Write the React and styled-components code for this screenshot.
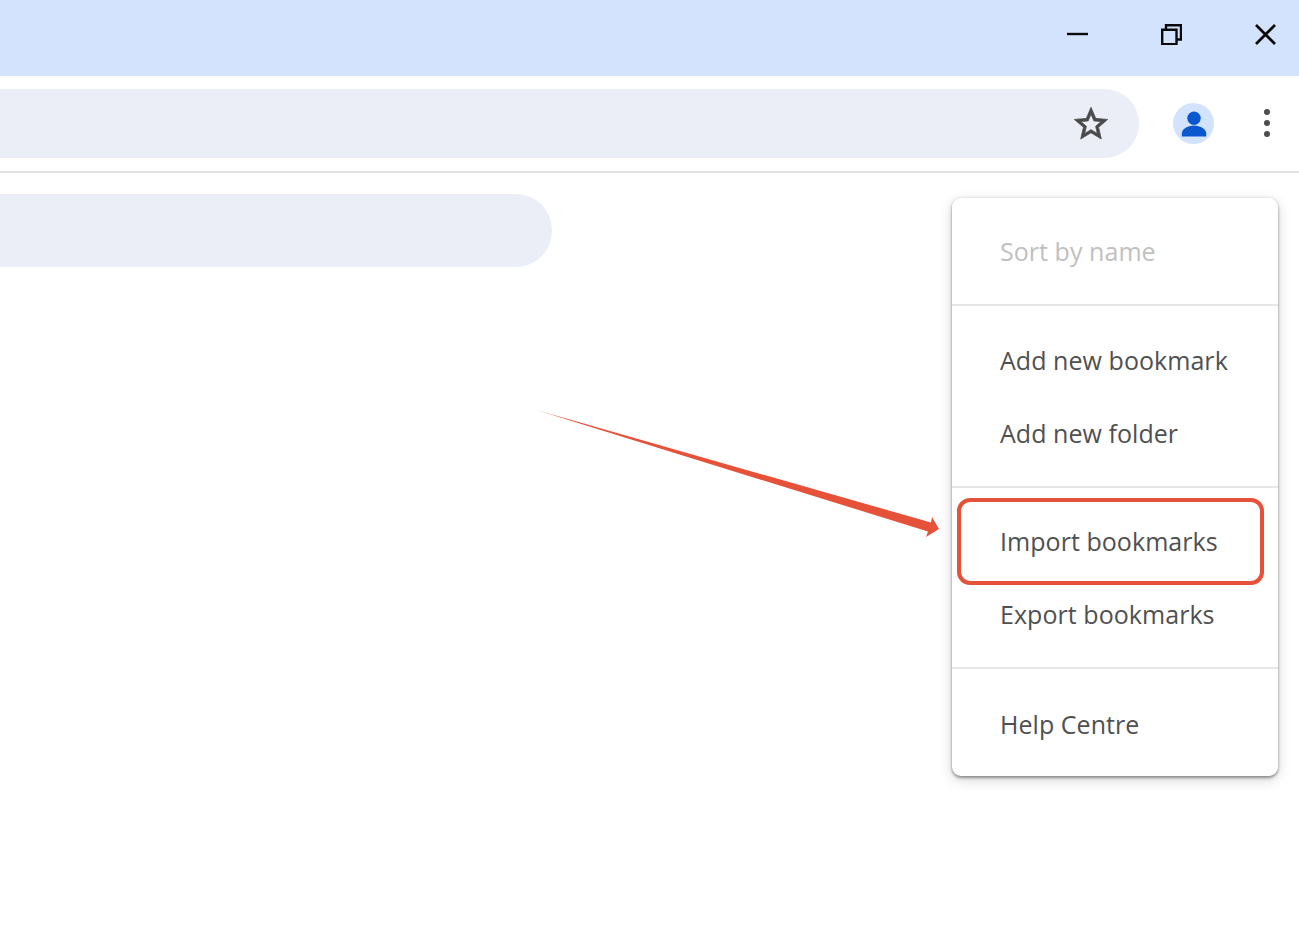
import React from 'react';
import styled, { createGlobalStyle } from 'styled-components';

const GlobalStyle = createGlobalStyle`
  html, body {
    margin: 0;
    padding: 0;
    background: #fff;
    overflow: hidden;
  }
  body {
    font-family: 'Open Sans', 'Noto Sans', 'Liberation Sans', sans-serif;
  }
`;

const Page = styled.div`
  position: relative;
  width: 1299px;
  height: 937px;
  overflow: hidden;
  background: #fff;
`;

const TitleBar = styled.div`
  height: 76px;
  background: #d3e3fd;
  display: flex;
  justify-content: flex-end;
  gap: 73px;
  padding: 24px 23px 0 0;
  box-sizing: border-box;
`;

const WindowIcon = styled.svg`
  width: 21px;
  height: 21px;
  display: block;
  fill: none;
  stroke: #0a0a0a;
`;

const Toolbar = styled.div`
  height: 95px;
  display: flex;
  align-items: flex-start;
  padding-top: 13px;
  box-sizing: border-box;
`;

const Omnibox = styled.div`
  width: 1139px;
  height: 69px;
  background: #ebeef7;
  border-radius: 0 35px 35px 0;
  display: flex;
  align-items: center;
  justify-content: flex-end;
  padding-right: 28px;
  box-sizing: border-box;
`;

const Avatar = styled.div`
  width: 41px;
  height: 41px;
  margin: 14px 0 0 34px;
  border-radius: 50%;
  background: #d3e3fd;
  display: flex;
  align-items: center;
  justify-content: center;
`;

const Kebab = styled.div`
  margin: 20px 0 0 50px;
  display: flex;
  flex-direction: column;
  gap: 5px;
`;

const Dot = styled.span`
  width: 6px;
  height: 6px;
  border-radius: 50%;
  background: #4d4d4d;
`;

const Divider = styled.div`
  height: 2px;
  background: #e1e1e1;
`;

const Content = styled.div`
  display: flex;
  justify-content: space-between;
  align-items: flex-start;
  padding: 21px 21px 0 0;
`;

const SearchPill = styled.div`
  width: 552px;
  height: 73px;
  background: #ebeef7;
  border-radius: 0 36px 36px 0;
`;

const Menu = styled.div`
  width: 326px;
  margin-top: 4px;
  background: #fff;
  border-radius: 9px;
  box-shadow: 0 2px 3px rgba(0, 0, 0, 0.36), 0 0 3px rgba(0, 0, 0, 0.12), 0 4px 14px rgba(0, 0, 0, 0.16);
`;

const MenuGroup = styled.div`
  padding: ${(p) => p.$top}px 0 ${(p) => p.$bottom}px;
  border-bottom: ${(p) => (p.$last ? '0' : '2px solid #e6e6e6')};
`;

const MenuItem = styled.div`
  height: 73px;
  display: flex;
  align-items: center;
  padding-left: 48px;
  font-size: 25px;
  letter-spacing: 0.05px;
  color: ${(p) => (p.$disabled ? '#c0c0c0' : '#505050')};
`;

const Highlight = styled.div`
  position: absolute;
  left: 957px;
  top: 498px;
  width: 307px;
  height: 87px;
  box-sizing: border-box;
  border: 4px solid #e6513a;
  border-radius: 13px;
`;

const ArrowSvg = styled.svg`
  position: absolute;
  left: 530px;
  top: 400px;
  width: 420px;
  height: 145px;
`;

const App = () => (
  <Page>
    <GlobalStyle />
    <TitleBar>
      <WindowIcon viewBox="0 0 21 21">
        <path d="M0 10h21" strokeWidth="2.4" />
      </WindowIcon>
      <WindowIcon viewBox="0 0 21 21">
        <path d="M1.2 5.8h14.3v14.4H1.2z" strokeWidth="2.4" />
        <path d="M5 5.5V1.2h15v14.3h-4.5" strokeWidth="2.4" />
      </WindowIcon>
      <WindowIcon viewBox="0 0 21 21">
        <path d="M1 1l19 19M20 1L1 20" strokeWidth="2.7" />
      </WindowIcon>
    </TitleBar>
    <Toolbar>
      <Omnibox>
        <svg width="40" height="40" viewBox="0 0 24 24" fill="#4a4a4a" stroke="#4a4a4a" strokeWidth="0.45">
          <path d="M22 9.24l-7.19-.62L12 2 9.19 8.63 2 9.24l5.46 4.73L5.82 21 12 17.27 18.18 21l-1.63-7.03L22 9.24zM12 15.4l-3.76 2.27 1-4.28-3.32-2.88 4.38-.38L12 6.1l1.71 4.04 4.38.38-3.32 2.88 1 4.28L12 15.4z" />
        </svg>
      </Omnibox>
      <Avatar>
        <svg width="28" height="28" viewBox="0 0 28 28" fill="#0b57d0">
          <circle cx="14" cy="8.2" r="6.7" />
          <path d="M1.8 26.4v-2.9C1.8 18.5 9 15.6 14 15.6s12.2 2.9 12.2 7.9v2.9z" />
        </svg>
      </Avatar>
      <Kebab>
        <Dot />
        <Dot />
        <Dot />
      </Kebab>
    </Toolbar>
    <Divider />
    <Content>
      <SearchPill />
      <Menu>
        <MenuGroup $top={16} $bottom={17}>
          <MenuItem $disabled>Sort by name</MenuItem>
        </MenuGroup>
        <MenuGroup $top={17} $bottom={17}>
          <MenuItem>Add new bookmark</MenuItem>
          <MenuItem>Add new folder</MenuItem>
        </MenuGroup>
        <MenuGroup $top={16} $bottom={17}>
          <MenuItem>Import bookmarks</MenuItem>
          <MenuItem>Export bookmarks</MenuItem>
        </MenuGroup>
        <MenuGroup $last $top={18} $bottom={16}>
          <MenuItem>Help Centre</MenuItem>
        </MenuGroup>
      </Menu>
    </Content>
    <Highlight />
    <ArrowSvg viewBox="0 0 420 145">
      <defs>
        <linearGradient id="arrowFade" x1="0" y1="0" x2="1" y2="0">
          <stop offset="0" stopColor="#e6513a" stopOpacity="0.25" />
          <stop offset="0.08" stopColor="#e6513a" />
          <stop offset="1" stopColor="#e6513a" />
        </linearGradient>
      </defs>
      <polygon
        points="3,9 401,122.5 402,117 409,129 396,137 398,131.5"
        fill="url(#arrowFade)"
      />
    </ArrowSvg>
  </Page>
);

export default App;
